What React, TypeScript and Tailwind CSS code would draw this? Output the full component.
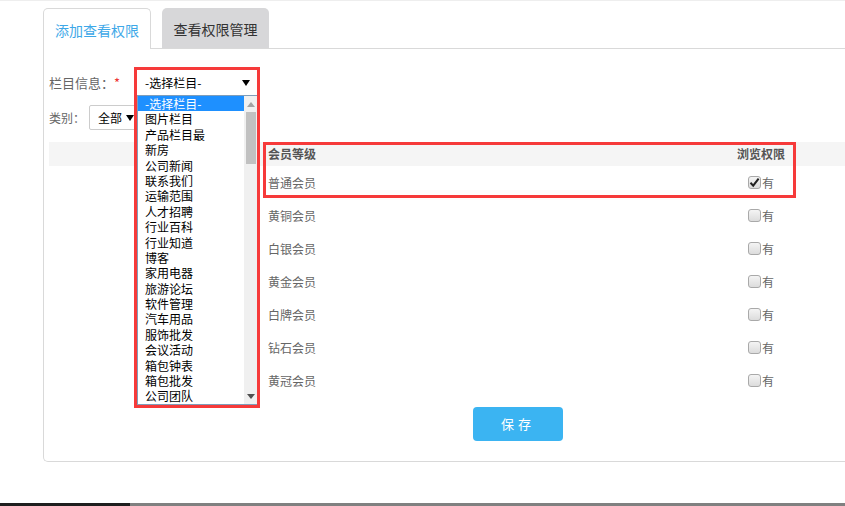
import React from "react";

const columns = [
  "-选择栏目-",
  "图片栏目",
  "产品栏目最",
  "新房",
  "公司新闻",
  "联系我们",
  "运输范围",
  "人才招聘",
  "行业百科",
  "行业知道",
  "博客",
  "家用电器",
  "旅游论坛",
  "软件管理",
  "汽车用品",
  "服饰批发",
  "会议活动",
  "箱包钟表",
  "箱包批发",
  "公司团队",
];

const levels = [
  { name: "普通会员", checked: true },
  { name: "黄铜会员", checked: false },
  { name: "白银会员", checked: false },
  { name: "黄金会员", checked: false },
  { name: "白牌会员", checked: false },
  { name: "钻石会员", checked: false },
  { name: "黄冠会员", checked: false },
];

const Checkbox = ({ checked }: { checked: boolean }) => (
  <span className="relative inline-block w-[13px] h-[13px] rounded-[3px] border border-[#a9a9a9] bg-gradient-to-b from-[#f4f4f4] to-[#dcdcdc]">
    {checked && (
      <svg viewBox="0 0 13 13" className="absolute -left-px -top-px w-[13px] h-[13px]">
        <path d="M2.5 6.8 L5.2 9.6 L10.6 2.6" fill="none" stroke="#222" strokeWidth="2" />
      </svg>
    )}
  </span>
);

const Arrow = ({ color = "#000" }: { color?: string }) => (
  <svg viewBox="0 0 8 6" className="w-[8px] h-[6px]">
    <path d="M0 0 H8 L4 6 Z" fill={color} />
  </svg>
);

export default function App() {
  return (
    <div className="w-[845px] h-[506px] bg-white flex flex-col overflow-hidden font-['Microsoft_YaHei','Noto_Sans_CJK_SC',sans-serif]">
      <div className="h-px bg-[#eeeeee]" />
      <div className="flex-1 pl-[43px] pt-[7px]">
        {/* tabs */}
        <div className="flex gap-[11px] h-[41px] -mb-px relative z-10">
          <div className="w-[108px] h-[41px] bg-white border border-b-0 border-[#d9d9d9] rounded-t-[5px] flex items-center justify-center pt-[2px] text-[14px] text-[#3ea8e8]">
            添加查看权限
          </div>
          <div className="w-[107px] h-[40px] bg-[#d7d7d9] rounded-t-[5px] flex items-center justify-center pt-[2px] text-[14px] text-[#333]">
            查看权限管理
          </div>
        </div>

        {/* panel */}
        <div className="h-[414px] border border-r-0 border-[#d9d9d9] rounded-bl-[5px] pl-[5px] pt-[21px]">
          <div className="flex items-center h-[25px]">
            <span className="w-[88px] text-[13px] text-[#666]">
              栏目信息：<span className="text-[#e33]">*</span>
            </span>
            <div className="relative w-[120px] h-[25px] bg-white flex items-center pl-[8px] pr-[7px] text-[12px] text-black">
              <span className="flex-1">-选择栏目-</span>
              <Arrow />
              {/* open dropdown list */}
              <div className="absolute left-0 top-full w-[121px] h-[310px] border border-[#7f9db9] bg-white flex z-20">
                <div className="flex-1 flex flex-col">
                  {columns.map((c, i) => (
                    <div
                      key={c}
                      className={
                        i === 0
                          ? "h-[15.4px] leading-[15.4px] pl-[7px] text-[12px] bg-[#1e90ff] text-white"
                          : "h-[15.4px] leading-[15.4px] pl-[7px] text-[12px] text-black"
                      }
                    >
                      {c}
                    </div>
                  ))}
                </div>
                <div className="w-[13px] bg-[#f0f0f0] flex flex-col items-center">
                  <div className="h-[16px] flex items-center justify-center">
                    <svg viewBox="0 0 8 5" className="w-[8px] h-[5px]">
                      <path d="M0 5 H8 L4 0 Z" fill="#a3a3a3" />
                    </svg>
                  </div>
                  <div className="w-[10px] h-[52px] bg-[#c1c1c1]" />
                  <div className="flex-1" />
                  <div className="h-[15px] flex items-center justify-center">
                    <svg viewBox="0 0 8 5" className="w-[8px] h-[5px]">
                      <path d="M0 0 H8 L4 5 Z" fill="#505050" />
                    </svg>
                  </div>
                </div>
              </div>
              {/* annotation */}
              <div className="absolute -left-[3px] -top-[3px] w-[126px] h-[341px] border-[3px] border-[#f63a3a] z-30 pointer-events-none" />
            </div>
          </div>

          <div className="flex items-center h-[25px] mt-[10px]">
            <span className="w-[40px] text-[12px] text-[#666]">类别：</span>
            <div className="w-[60px] h-[25px] border border-[#ccc] rounded-[2px] flex items-center pl-[8px] text-[12px] text-black gap-[4px]">
              全部 <Arrow />
            </div>
          </div>

          {/* table */}
          <div className="relative mt-[12px] w-[796px]">
            <div className="grid grid-cols-[214px_448px_100px_34px] h-[24px] bg-[#f5f5f5] items-center text-[12px] font-bold text-[#555]">
              <div />
              <div className="pl-[5px]">会员等级</div>
              <div className="text-center">浏览权限</div>
              <div />
            </div>
            {levels.map((l) => (
              <div key={l.name} className="grid grid-cols-[214px_448px_100px_34px] h-[33px] items-center text-[12px] text-[#666]">
                <div />
                <div className="pl-[5px]">{l.name}</div>
                <div className="flex items-center justify-center gap-[1px]">
                  <Checkbox checked={l.checked} />
                  <span>有</span>
                </div>
                <div />
              </div>
            ))}
            <div className="absolute left-[214px] top-0 w-[533px] h-[56px] border-[3px] border-[#f63a3a] pointer-events-none" />
          </div>

          <div className="mt-[10px] pl-[424px]">
            <button className="w-[90px] h-[34px] rounded-[4px] bg-[#3bb4f2] text-white text-[13px] tracking-[4px]">
              保存
            </button>
          </div>
        </div>
      </div>
      <div className="h-[3px] flex">
        <div className="w-[130px] bg-[#1e1e1e]" />
        <div className="flex-1 bg-[#808080]" />
      </div>
    </div>
  );
}
